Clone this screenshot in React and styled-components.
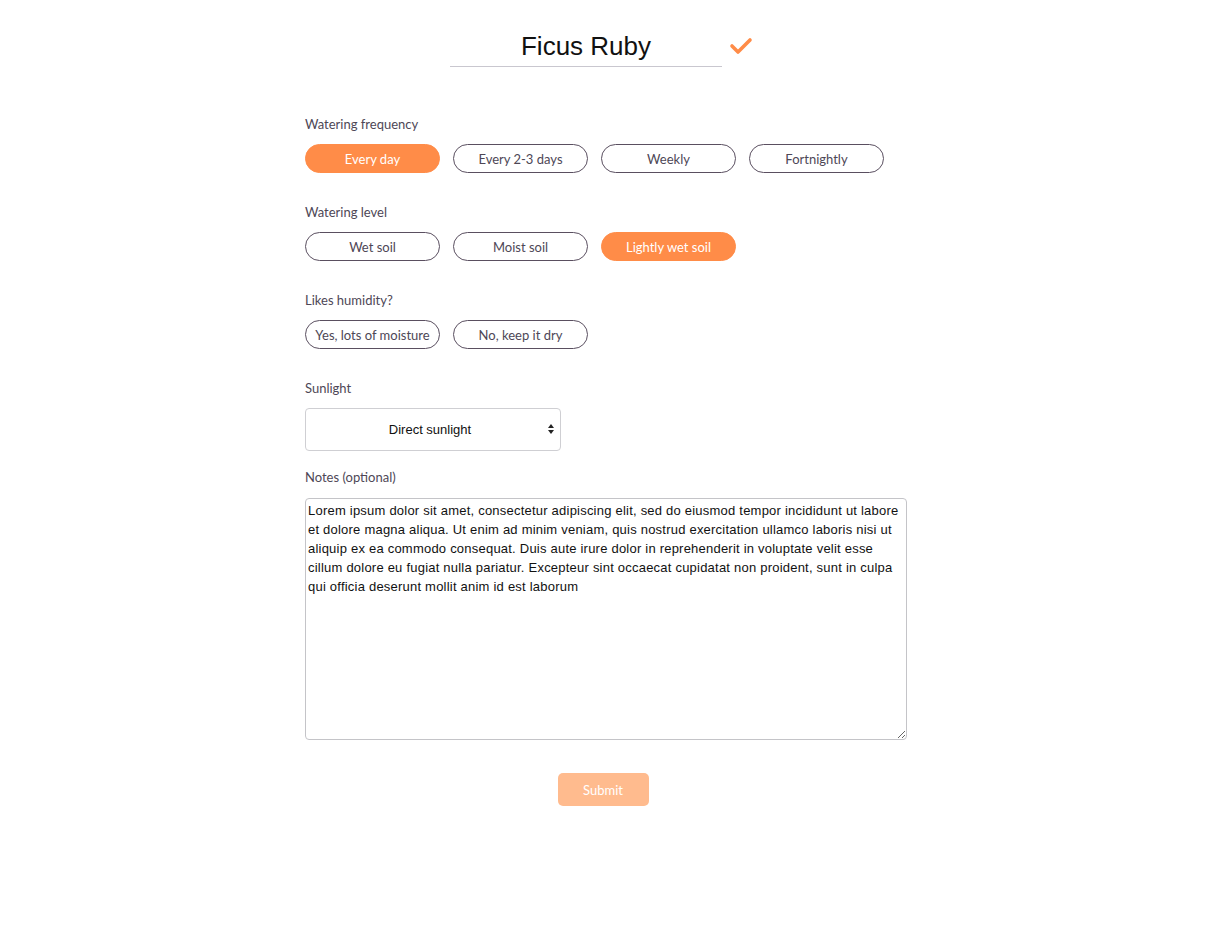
import React, { useState } from "react"
import styled, { createGlobalStyle } from "styled-components"

const GlobalStyle = createGlobalStyle`
  body {
    margin: 0;
    background: #fff;
    font-family: "Lato", "Liberation Sans", sans-serif;
  }
`

const Page = styled.div`
  width: 1205px;
  min-height: 946px;
  display: flex;
  flex-direction: column;
  align-items: center;
  padding: 31px 0 0 7px;
  box-sizing: border-box;
`

const TitleRow = styled.div`
  display: flex;
  align-items: center;
  margin-left: -9px;
  margin-bottom: 49px;
`

const TitleInput = styled.input`
  width: 272px;
  border: none;
  border-bottom: 1px solid #c9c7cf;
  font-family: "Liberation Sans", Arial, sans-serif;
  font-size: 26px;
  color: #111;
  text-align: center;
  padding: 0 0 4px;
  outline: none;
  background: transparent;
`

const CheckButton = styled.button`
  border: none;
  background: none;
  padding: 0;
  margin-left: 7px;
  margin-top: -6px;
  display: flex;
  cursor: pointer;
`

const Form = styled.form`
  width: 602px;
  display: flex;
  flex-direction: column;
`

const Section = styled.div`
  display: flex;
  flex-direction: column;
  margin-bottom: ${(p) => p.gap || "31px"};
`

const Label = styled.label`
  font-size: 13px;
  color: #4e4756;
  margin-bottom: ${(p) => p.space || "12px"};
  line-height: 16px;
`

const Options = styled.div`
  display: flex;
  gap: 13px;
`

const Pill = styled.button`
  width: 135px;
  height: 29px;
  border-radius: 15px;
  border: 1px solid ${(p) => (p.active ? "#ff8c48" : "#5a4f60")};
  background: ${(p) => (p.active ? "#ff8c48" : "#fff")};
  color: ${(p) => (p.active ? "#fff" : "#4e4756")};
  font-family: "Lato", "Liberation Sans", sans-serif;
  font-size: 13px;
  padding: 0;
  cursor: pointer;
`

const SelectWrap = styled.div`
  position: relative;
  width: 256px;
  height: 43px;
`

const Select = styled.select`
  appearance: none;
  width: 100%;
  height: 100%;
  border: 1px solid #cfcfd3;
  border-radius: 4px;
  background: #fff;
  font-family: "Liberation Sans", Arial, sans-serif;
  font-size: 13px;
  color: #111;
  text-align: center;
  text-align-last: center;
  padding: 0 6px 0 0;
`

const Arrows = styled.svg`
  position: absolute;
  right: 7px;
  top: 15px;
  pointer-events: none;
`

const Notes = styled.textarea`
  display: block;
  width: 602px;
  height: 242px;
  box-sizing: border-box;
  border: 1px solid #c4c4c8;
  border-radius: 4px;
  font-family: "Liberation Sans", Arial, sans-serif;
  font-size: 13px;
  letter-spacing: 0.22px;
  line-height: 19px;
  color: #111;
  padding: 2px 2px;
  resize: both;
`

const Footer = styled.div`
  display: flex;
  justify-content: center;
  margin-top: 33px;
  padding-right: 6px;
`

const Submit = styled.button`
  width: 91px;
  height: 33px;
  border: none;
  border-radius: 5px;
  background: #ffbb8e;
  color: #fff;
  font-family: "Lato", "Liberation Sans", sans-serif;
  font-size: 13px;
`

const lorem =
  "Lorem ipsum dolor sit amet, consectetur adipiscing elit, sed do eiusmod tempor incididunt ut labore et dolore magna aliqua. Ut enim ad minim veniam, quis nostrud exercitation ullamco laboris nisi ut aliquip ex ea commodo consequat. Duis aute irure dolor in reprehenderit in voluptate velit esse cillum dolore eu fugiat nulla pariatur. Excepteur sint occaecat cupidatat non proident, sunt in culpa qui officia deserunt mollit anim id est laborum"

const OptionGroup = ({ label, options, value, onChange }) => (
  <Section>
    <Label>{label}</Label>
    <Options>
      {options.map((o) => (
        <Pill key={o} type="button" active={o === value} onClick={() => onChange(o)}>
          {o}
        </Pill>
      ))}
    </Options>
  </Section>
)

const App = () => {
  const [frequency, setFrequency] = useState("Every day")
  const [level, setLevel] = useState("Lightly wet soil")
  const [humidity, setHumidity] = useState(null)
  const [notes, setNotes] = useState(lorem)

  return (
    <>
      <GlobalStyle />
      <Page>
        <TitleRow>
          <TitleInput defaultValue="Ficus Ruby" />
          <CheckButton type="button">
            <svg width="24" height="18" viewBox="0 0 24 18">
              <path d="M3 9 L9 15 L21 3" fill="none" stroke="#ff8c48" strokeWidth="3.6" strokeLinecap="round" strokeLinejoin="round" />
            </svg>
          </CheckButton>
        </TitleRow>
        <Form onSubmit={(e) => e.preventDefault()}>
          <OptionGroup
            label="Watering frequency"
            options={["Every day", "Every 2-3 days", "Weekly", "Fortnightly"]}
            value={frequency}
            onChange={setFrequency}
          />
          <OptionGroup
            label="Watering level"
            options={["Wet soil", "Moist soil", "Lightly wet soil"]}
            value={level}
            onChange={setLevel}
          />
          <OptionGroup
            label="Likes humidity?"
            options={["Yes, lots of moisture", "No, keep it dry"]}
            value={humidity}
            onChange={setHumidity}
          />
          <Section gap="18px">
            <Label>Sunlight</Label>
            <SelectWrap>
              <Select defaultValue="Direct sunlight">
                <option>Direct sunlight</option>
                <option>Indirect sunlight</option>
                <option>Shade</option>
              </Select>
              <Arrows width="6" height="12" viewBox="0 0 6 12">
                <path d="M3 1 L6 5 L0 5 Z M3 11 L6 7 L0 7 Z" fill="#222" />
              </Arrows>
            </SelectWrap>
          </Section>
          <Section gap="0">
            <Label space="13px">Notes (optional)</Label>
            <Notes value={notes} onChange={(e) => setNotes(e.target.value)} />
          </Section>
          <Footer>
            <Submit type="submit">Submit</Submit>
          </Footer>
        </Form>
      </Page>
    </>
  )
}

export default App
